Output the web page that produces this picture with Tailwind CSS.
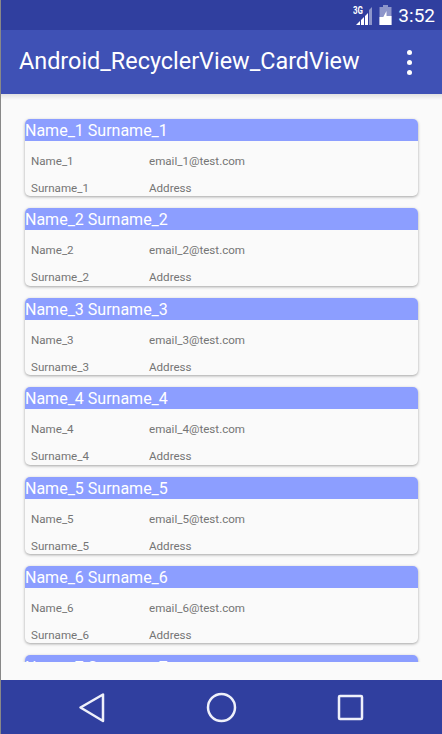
<!doctype html>
<html>
<head>
  <meta charset="UTF-8">
  <meta name="viewport" content="width=device-width, initial-scale=1.0">
  <script src="https://cdn.jsdelivr.net/npm/@tailwindcss/browser@4"></script>
</head>
<body class="bg-[#888] font-['Roboto',sans-serif]">
  <div class="ml-px w-[441px] h-[734px] flex flex-col overflow-hidden bg-[#fafafa]">
    <!-- Status bar -->
    <div class="h-[30px] shrink-0 bg-[#303f9f] flex items-center justify-end pr-[7px] text-white">
      <svg class="w-[20px] h-[22px] mr-[6px]" viewBox="0 0 20 22">
        <text x="0" y="10" fill="#fff" font-size="10" font-weight="700" textLength="10" lengthAdjust="spacingAndGlyphs" font-family="Roboto">3G</text>
        <path d="M19 3v18H16V6z" fill="#fff" fill-opacity=".45"/>
        <path d="M15 9v12h-3V12zM11 13v8H8v-5zM7 17v4H3z" fill="#fff"/>
      </svg>
      <svg class="w-[13px] h-[20px] mr-[6px]" viewBox="0 0 13 20">
        <path d="M4 0h5v2h3.500v18H.5V2H4z" fill="#fff" fill-opacity=".45"/>
        <path d="M.5 12h3.800L7.500 6v5h5v9H.5z" fill="#fff"/>
      </svg>
      <span class="text-[19px] leading-none">3:52</span>
    </div>
    <!-- App bar -->
    <div class="h-[64px] shrink-0 bg-[#3f51b5] flex items-center justify-between pl-[18px] pr-[30px] text-white">
      <span class="text-[23.4px]">Android_RecyclerView_CardView</span>
      <div class="flex flex-col gap-[5px]">
        <span class="w-[5px] h-[5px] rounded-full bg-white"></span>
        <span class="w-[5px] h-[5px] rounded-full bg-white"></span>
        <span class="w-[5px] h-[5px] rounded-full bg-white"></span>
      </div>
    </div>
    <!-- List -->
    <div class="relative h-[586px] shrink-0 overflow-hidden pt-[25px] pl-[24px] pr-[24px] flex flex-col gap-[12px]">
      <div class="absolute inset-x-0 top-0 h-[6px] bg-gradient-to-b from-black/10 to-transparent"></div>

      <div class="h-[77.4px] shrink-0 rounded-[5px] overflow-hidden bg-[#fafafa] shadow-[0_1px_3px_rgba(0,0,0,0.35)]">
        <div class="h-[22px] bg-[#8c9eff] text-white text-[16px] leading-[23px]">Name_1 Surname_1</div>
        <div class="grid grid-cols-[118px_1fr] pl-[6px] pt-[12px] gap-y-[11px] text-[11.6px] leading-[16px] text-[#757575]">
          <span>Name_1</span><span>email_1@test.com</span>
          <span>Surname_1</span><span>Address</span>
        </div>
      </div>
      <div class="h-[77.4px] shrink-0 rounded-[5px] overflow-hidden bg-[#fafafa] shadow-[0_1px_3px_rgba(0,0,0,0.35)]">
        <div class="h-[22px] bg-[#8c9eff] text-white text-[16px] leading-[23px]">Name_2 Surname_2</div>
        <div class="grid grid-cols-[118px_1fr] pl-[6px] pt-[12px] gap-y-[11px] text-[11.6px] leading-[16px] text-[#757575]">
          <span>Name_2</span><span>email_2@test.com</span>
          <span>Surname_2</span><span>Address</span>
        </div>
      </div>
      <div class="h-[77.4px] shrink-0 rounded-[5px] overflow-hidden bg-[#fafafa] shadow-[0_1px_3px_rgba(0,0,0,0.35)]">
        <div class="h-[22px] bg-[#8c9eff] text-white text-[16px] leading-[23px]">Name_3 Surname_3</div>
        <div class="grid grid-cols-[118px_1fr] pl-[6px] pt-[12px] gap-y-[11px] text-[11.6px] leading-[16px] text-[#757575]">
          <span>Name_3</span><span>email_3@test.com</span>
          <span>Surname_3</span><span>Address</span>
        </div>
      </div>
      <div class="h-[77.4px] shrink-0 rounded-[5px] overflow-hidden bg-[#fafafa] shadow-[0_1px_3px_rgba(0,0,0,0.35)]">
        <div class="h-[22px] bg-[#8c9eff] text-white text-[16px] leading-[23px]">Name_4 Surname_4</div>
        <div class="grid grid-cols-[118px_1fr] pl-[6px] pt-[12px] gap-y-[11px] text-[11.6px] leading-[16px] text-[#757575]">
          <span>Name_4</span><span>email_4@test.com</span>
          <span>Surname_4</span><span>Address</span>
        </div>
      </div>
      <div class="h-[77.4px] shrink-0 rounded-[5px] overflow-hidden bg-[#fafafa] shadow-[0_1px_3px_rgba(0,0,0,0.35)]">
        <div class="h-[22px] bg-[#8c9eff] text-white text-[16px] leading-[23px]">Name_5 Surname_5</div>
        <div class="grid grid-cols-[118px_1fr] pl-[6px] pt-[12px] gap-y-[11px] text-[11.6px] leading-[16px] text-[#757575]">
          <span>Name_5</span><span>email_5@test.com</span>
          <span>Surname_5</span><span>Address</span>
        </div>
      </div>
      <div class="h-[77.4px] shrink-0 rounded-[5px] overflow-hidden bg-[#fafafa] shadow-[0_1px_3px_rgba(0,0,0,0.35)]">
        <div class="h-[22px] bg-[#8c9eff] text-white text-[16px] leading-[23px]">Name_6 Surname_6</div>
        <div class="grid grid-cols-[118px_1fr] pl-[6px] pt-[12px] gap-y-[11px] text-[11.6px] leading-[16px] text-[#757575]">
          <span>Name_6</span><span>email_6@test.com</span>
          <span>Surname_6</span><span>Address</span>
        </div>
      </div>
      <div class="h-[77.4px] shrink-0 rounded-[5px] overflow-hidden bg-[#fafafa] shadow-[0_1px_3px_rgba(0,0,0,0.35)]">
        <div class="h-[22px] bg-[#8c9eff] text-white text-[16px] leading-[25px]">Name_7 Surname_7</div>
      </div>

      <div class="absolute inset-x-0 bottom-0 h-[18px] bg-[#fafafa]"></div>
    </div>
    <!-- Nav bar -->
    <div class="h-[54px] shrink-0 bg-[#303f9f] flex items-center">
      <svg class="w-[441px] h-[54px]" viewBox="0 0 441 54" fill="none" stroke="#eef0fa" stroke-width="2.500" stroke-linejoin="round">
        <path d="M102 14.500V41L79.500 27.500z"/>
        <circle cx="220.500" cy="27.500" r="13.500"/>
        <rect x="338" y="16" width="23" height="23" rx="1"/>
      </svg>
    </div>
  </div>
</body>
</html>
